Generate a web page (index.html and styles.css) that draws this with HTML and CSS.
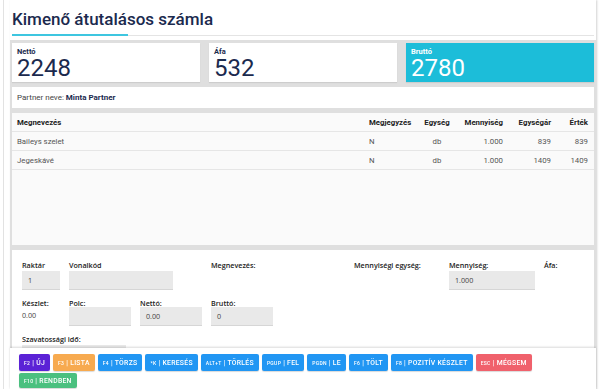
FILE: index.html
```html
<!DOCTYPE html>
<html lang="hu">
<head>
  <meta charset="UTF-8">
  <meta name="viewport" content="width=device-width, initial-scale=1.0">
  <title>Kimenő átutalásos számla</title>
  <link rel="stylesheet" href="styles.css">
</head>
<body>
  <div class="shell">
    <div class="panel">
      <div class="page-head">
        <h1>Kimenő átutalásos számla</h1>
        <div class="head-line"><span class="accent"></span></div>
      </div>

      <div class="content">
        <div class="totals">
          <div class="total-card">
            <div class="total-label">Nettó</div>
            <div class="total-value">2248</div>
          </div>
          <div class="total-card">
            <div class="total-label">Áfa</div>
            <div class="total-value">532</div>
          </div>
          <div class="total-card total-main">
            <div class="total-label">Bruttó</div>
            <div class="total-value">2780</div>
          </div>
        </div>

        <div class="partner">Partner neve: <strong>Minta Partner</strong></div>

        <div class="items">
          <table class="item-table">
            <colgroup>
              <col class="c-name">
              <col class="c-note">
              <col class="c-unit">
              <col class="c-qty">
              <col class="c-price">
              <col class="c-value">
            </colgroup>
            <thead>
              <tr>
                <th>Megnevezés</th>
                <th>Megjegyzés</th>
                <th class="center">Egység</th>
                <th class="num">Mennyiség</th>
                <th class="num">Egységár</th>
                <th class="num">Érték</th>
              </tr>
            </thead>
            <tbody>
              <tr>
                <td>Baileys szelet</td>
                <td>N</td>
                <td class="center">db</td>
                <td class="num">1.000</td>
                <td class="num">839</td>
                <td class="num">839</td>
              </tr>
              <tr>
                <td>Jegeskávé</td>
                <td>N</td>
                <td class="center">db</td>
                <td class="num">1.000</td>
                <td class="num">1409</td>
                <td class="num">1409</td>
              </tr>
            </tbody>
          </table>
        </div>

        <div class="editor">
          <div class="field-row">
            <div class="field w-raktar">
              <label>Raktár</label>
              <div class="input">1</div>
            </div>
            <div class="field w-vonal">
              <label>Vonalkód</label>
              <div class="input i-vonal"></div>
            </div>
            <div class="field w-megn">
              <label>Megnevezés:</label>
            </div>
            <div class="field w-megy">
              <label>Mennyiségi egység:</label>
            </div>
            <div class="field w-menny">
              <label>Mennyiség:</label>
              <div class="input">1.000</div>
            </div>
            <div class="field">
              <label>Áfa:</label>
            </div>
          </div>

          <div class="field-row">
            <div class="field w-raktar">
              <label>Készlet:</label>
              <div class="plain">0.00</div>
            </div>
            <div class="field w-polc">
              <label>Polc:</label>
              <div class="input"></div>
            </div>
            <div class="field w-polc">
              <label>Nettó:</label>
              <div class="input">0.00</div>
            </div>
            <div class="field w-polc">
              <label>Bruttó:</label>
              <div class="input">0</div>
            </div>
          </div>

          <div class="field-row">
            <div class="field w-szav">
              <label>Szavatossági idő:</label>
              <div class="input"></div>
            </div>
          </div>
        </div>
      </div>
    </div>
  </div>

  <div class="toolbar">
    <button class="btn btn-purple"><small>F2</small> | ÚJ</button>
    <button class="btn btn-orange"><small>F3</small> | LISTA</button>
    <button class="btn btn-blue"><small>F4</small> | TÖRZS</button>
    <button class="btn btn-blue"><small>*K</small> | KERESÉS</button>
    <button class="btn btn-blue"><small>ALT+T</small> | TÖRLÉS</button>
    <button class="btn btn-blue"><small>PGUP</small> | FEL</button>
    <button class="btn btn-blue"><small>PGDN</small> | LE</button>
    <button class="btn btn-blue"><small>F6</small> | TÖLT</button>
    <button class="btn btn-blue"><small>F8</small> | POZITÍV KÉSZLET</button>
    <button class="btn btn-red"><small>ESC</small> | MÉGSEM</button>
    <button class="btn btn-green"><small>F10</small> | RENDBEN</button>
  </div>
</body>
</html>
```

FILE: styles.css
```css
html, body {
  margin: 0;
  padding: 0;
  height: 100%;
  overflow: hidden;
}

body {
  font-family: Roboto, "Liberation Sans", sans-serif;
  background: #fff;
  color: #1b2a4e;
}

.shell {
  margin-left: 3px;
  border-left: 1px solid #e2e2e2;
  padding-left: 6px;
  width: 586px;
}

.panel {
  box-shadow: 1px 0 2px rgba(0, 0, 0, 0.18);
}

.page-head {
  background: #fff;
  padding: 0 2px;
  height: 40px;
}

h1 {
  margin: 0;
  padding: 8px 0 0 0;
  font-size: 17px;
  font-weight: 500;
  line-height: 22px;
  color: #1b2a4e;
  height: 27px;
}

.head-line {
  height: 1px;
  background: #e4e4e4;
  position: relative;
}

.accent {
  position: absolute;
  left: 0;
  top: -1px;
  width: 116px;
  height: 2px;
  background: #3ec6e0;
}

.content {
  background: #dfdfdf;
  padding: 3px 2px 0 2px;
  height: 360px;
}

.totals {
  display: flex;
  gap: 9px;
}

.total-card {
  flex: 1;
  height: 39px;
  background: #fff;
  padding: 5px 5px 0 5px;
  box-sizing: border-box;
  box-shadow: 0 1px 1px rgba(0, 0, 0, 0.08);
}

.total-label {
  font-size: 7.5px;
  font-weight: 700;
  line-height: 8px;
}

.total-value {
  font-size: 24px;
  line-height: 24px;
}

.total-main {
  background: #1cbdd9;
  color: #fff;
}

.partner {
  margin-top: 5px;
  height: 21px;
  background: #fff;
  font-size: 8px;
  line-height: 21px;
  padding-left: 5px;
  color: #444;
}

.partner strong {
  color: #1b2a4e;
}

.items {
  margin-top: 5px;
  height: 132px;
  background: #fafafa;
}

.item-table {
  width: 100%;
  table-layout: fixed;
  border-collapse: collapse;
  font-size: 7.8px;
  color: #555;
}

.c-name { width: 352px; }
.c-note { width: 51px; }
.c-unit { width: 44px; }
.c-qty { width: 50px; }
.c-price { width: 48px; }
.c-value { width: 37px; }

.item-table th,
.item-table td {
  height: 18px;
  padding: 0 6px 0 5px;
  text-align: left;
  white-space: nowrap;
  border-bottom: 1px solid #e6e6e6;
}

.item-table th {
  color: #222;
  font-weight: 700;
}

.item-table .num {
  text-align: right;
}

.item-table .center {
  text-align: center;
  padding: 0;
}

.editor {
  margin-top: 5px;
  background: #fff;
  padding: 10px 10px 0 10px;
  height: 120px;
  font-family: "Open Sans", "Noto Sans", sans-serif;
  font-size: 7.2px;
  color: #333;
}

.field-row {
  display: flex;
  gap: 9px;
  margin-bottom: 8px;
}

.field label {
  display: block;
  font-weight: 600;
  line-height: 10px;
  margin-bottom: 1px;
  color: #222;
  white-space: nowrap;
}

.w-raktar { width: 38px; }
.w-vonal { width: 133px; }
.w-megn { width: 134px; }
.w-megy { width: 86px; }
.w-menny { width: 86px; }
.w-polc { width: 62px; }
.w-szav { width: 104px; }

.input {
  height: 18px;
  background: #e9e9e9;
  border-bottom: 1px solid #d6d6d6;
  line-height: 18px;
  padding: 0 6px;
  color: #444;
}

.i-vonal {
  width: 92px;
}

.w-polc .input {
  margin-top: -2px;
}

.plain {
  line-height: 12px;
  color: #444;
}

.toolbar {
  position: fixed;
  left: 10px;
  bottom: 0;
  width: 568px;
  height: 35px;
  padding: 6px 9px 0 9px;
  background: #fff;
  box-shadow: 0 -1px 2px rgba(0, 0, 0, 0.15);
  display: flex;
  flex-wrap: wrap;
  align-content: flex-start;
  column-gap: 3px;
  row-gap: 2px;
}

.btn {
  height: 17px;
  border: none;
  border-radius: 2px;
  padding: 0 5px;
  font-family: Roboto, "Liberation Sans", sans-serif;
  font-size: 6.8px;
  font-weight: 500;
  letter-spacing: 0.3px;
  color: #fff;
  box-shadow: 0 1px 1px rgba(0, 0, 0, 0.15);
  cursor: pointer;
}

.btn small {
  font-size: 5px;
}

.btn-purple { background: #5b22d6; }
.btn-orange { background: #f7aa4f; }
.btn-blue { background: #2196f3; }
.btn-red { background: #f0616c; }
.btn-green { background: #4bc07f; height: 15px; }
```
